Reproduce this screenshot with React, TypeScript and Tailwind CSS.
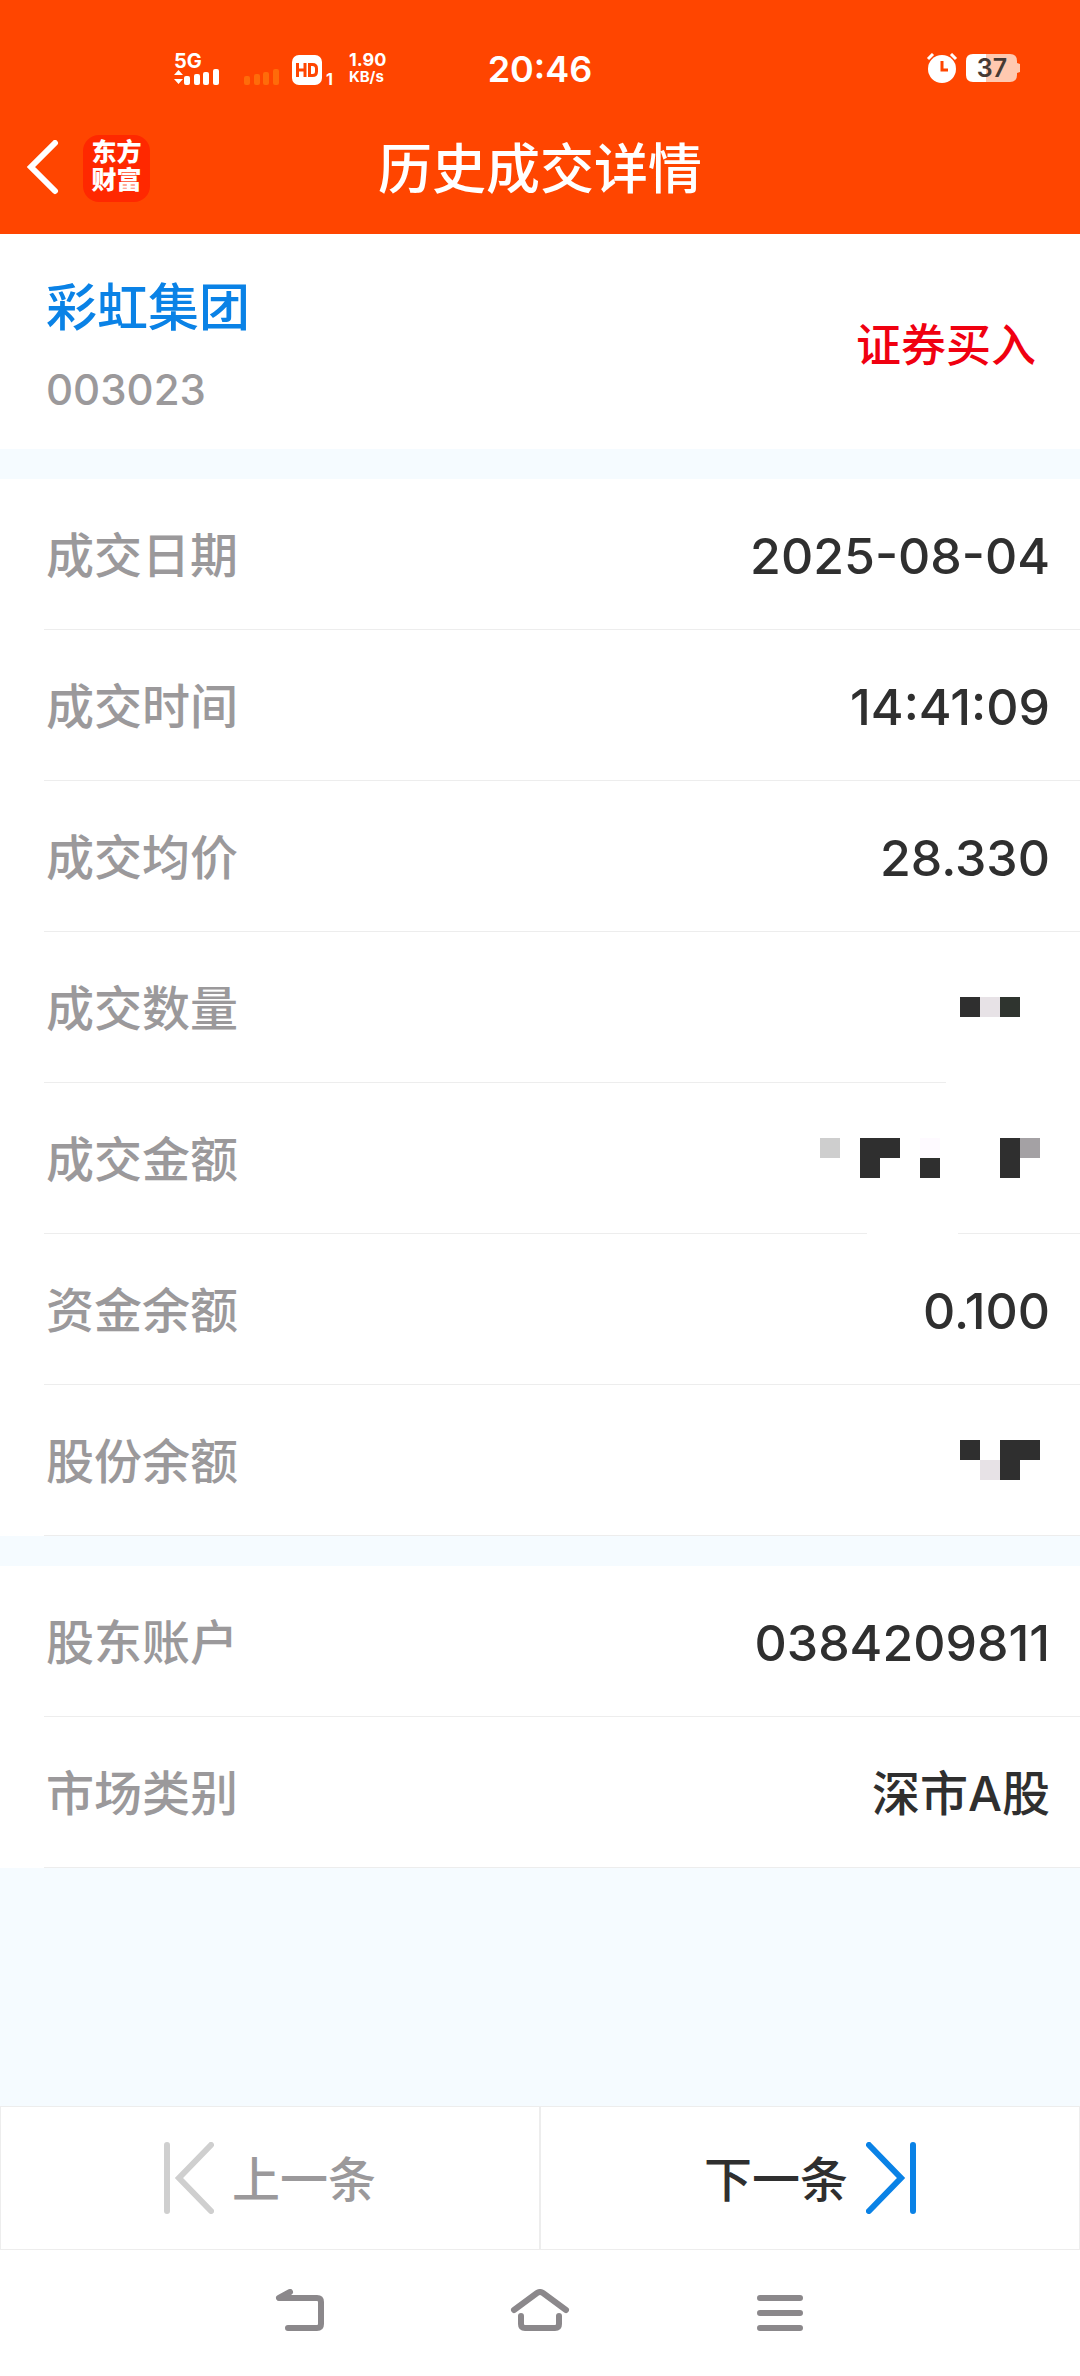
import React from "react";

type MosaicCell = [col: number, row: number, fill: string];

type DetailRow = {
  label: string;
  value?: string;
  mosaic?: { cols: number; rows: number; cells: MosaicCell[] };
  dividerMask?: string;
};

const INK = "#2f2f2f";

const tradeRows: DetailRow[] = [
  { label: "成交日期", value: "2025-08-04" },
  { label: "成交时间", value: "14:41:09" },
  { label: "成交均价", value: "28.330" },
  {
    label: "成交数量",
    mosaic: {
      cols: 4,
      rows: 1,
      cells: [
        [0, 0, INK],
        [1, 0, "#e7e2e6"],
        [2, 0, "#2f342f"],
      ],
    },
    dividerMask: "right-0 w-[134px]",
  },
  {
    label: "成交金额",
    mosaic: {
      cols: 11,
      rows: 2,
      cells: [
        [0, 0, "#cecece"],
        [2, 0, INK],
        [3, 0, INK],
        [2, 1, INK],
        [5, 0, "#fefaff"],
        [5, 1, INK],
        [9, 0, INK],
        [9, 1, INK],
        [10, 0, "#a4a1a4"],
      ],
    },
    dividerMask: "right-[122px] w-[91px]",
  },
  { label: "资金余额", value: "0.100" },
  {
    label: "股份余额",
    mosaic: {
      cols: 4,
      rows: 2,
      cells: [
        [0, 0, INK],
        [1, 1, "#e7e2e6"],
        [2, 0, INK],
        [3, 0, INK],
        [2, 1, INK],
      ],
    },
  },
];

const accountRows: DetailRow[] = [
  { label: "股东账户", value: "0384209811" },
  { label: "市场类别", value: "深市A股" },
];

const Mosaic: React.FC<NonNullable<DetailRow["mosaic"]>> = ({ cols, rows, cells }) => (
  <svg className="mr-2.5" width={cols * 20} height={rows * 20} shapeRendering="crispEdges" aria-hidden="true">
    {cells.map(([col, row, fill]) => (
      <rect key={`${col}-${row}`} x={col * 20} y={row * 20} width="20" height="20" fill={fill} />
    ))}
  </svg>
);

const isNumeric = (value: string) => /^[\d.:-]+$/.test(value);

const DetailList: React.FC<{ rows: DetailRow[] }> = ({ rows }) => (
  <dl className="bg-white">
    {rows.map(row => (
      <div
        key={row.label}
        className="relative ml-11 flex h-[151px] items-center justify-between border-b border-[#ededed] pr-[30px]"
      >
        <dt className="pl-0.5 pt-1 text-[48px] font-medium leading-[72px] text-[#9b999b]">{row.label}</dt>
        {row.mosaic && (
          <dd>
            <Mosaic {...row.mosaic} />
          </dd>
        )}
        {row.value && (
          <dd
            className={`pt-1 font-medium leading-[72px] text-[#2f2f2f] ${
              isNumeric(row.value) ? "text-[50px]" : "text-[48px]"
            }`}
          >
            {row.value}
          </dd>
        )}
        {row.dividerMask && <span className={`absolute -bottom-px h-px bg-white ${row.dividerMask}`} />}
      </div>
    ))}
  </dl>
);

const SignalBars: React.FC<{ className: string }> = ({ className }) => (
  <svg className={className} width="36" height="16" viewBox="0 0 36 16" fill="currentColor" aria-hidden="true">
    <rect x="0" y="7" width="6" height="9" rx="2" />
    <rect x="10" y="5" width="6" height="11" rx="2" />
    <rect x="19" y="3" width="6" height="13" rx="2" />
    <rect x="29" y="0" width="6" height="16" rx="2" />
  </svg>
);

const StatusBar = () => (
  <div className="grid h-[102px] grid-cols-[1fr_auto_1fr] items-center pt-[34px]">
    <div className="flex items-end pl-[174px]">
      <div className="flex flex-col">
        <span className="text-[20px] font-bold leading-4">5G</span>
        <div className="flex items-end">
          <svg width="9" height="16" viewBox="0 0 9 16" fill="currentColor" aria-hidden="true">
            <path d="M4.5 1 9 6H0zM0 10h9l-4.500 5z" />
          </svg>
          <SignalBars className="ml-px" />
        </div>
      </div>
      <SignalBars className="ml-6 text-[#ff6b0a]" />
      <svg className="ml-3" width="30" height="30" viewBox="0 0 30 30" aria-hidden="true">
        <rect width="30" height="30" rx="7" fill="#fff" />
        <path
          d="M5.500 8v14M13 8v14M5.500 15H13M17.500 9.500h3q4 0 4 4v3q0 4-4 4h-3z"
          fill="none"
          stroke="#ff4500"
          strokeWidth="3"
        />
      </svg>
      <span className="ml-1 text-[16px] font-bold leading-3">1</span>
      <div className="ml-4 flex flex-col font-bold">
        <span className="text-[18px] leading-[18px]">1.90</span>
        <span className="text-[15px] leading-4">KB/s</span>
      </div>
    </div>
    <time className="pt-0.5 text-[36px] font-semibold leading-10">20:46</time>
    <div className="flex items-center justify-end gap-2 pr-[59px]">
      <svg width="32" height="30" viewBox="0 0 32 30" aria-hidden="true">
        <circle cx="16" cy="16" r="14" fill="#fff" />
        <path d="m2 6 5-5M30 6l-5-5" stroke="#fff" strokeWidth="3" />
        <path d="M16 8v9h6" fill="none" stroke="#ff4500" strokeWidth="3" />
      </svg>
      <svg width="55" height="28" viewBox="0 0 55 28" aria-hidden="true">
        <path d="M7 0h13v28H7q-7 0-7-7V7q0-7 7-7z" fill="#fff" />
        <path d="M20 0h24q7 0 7 7v2l3 1v8l-3 1v2q0 7-7 7H20z" fill="#ffc9b0" />
        <text x="26" y="23" textAnchor="middle" fontSize="25" fontWeight="600" fill="#463a34">
          37
        </text>
      </svg>
    </div>
  </div>
);

const TitleBar = () => (
  <div className="grid h-[132px] grid-cols-[1fr_auto_1fr] items-center">
    <div className="flex items-center gap-6 pl-[26px]">
      <button type="button" aria-label="返回">
        <svg width="33" height="56" viewBox="0 0 33 56" fill="none" stroke="#fff" strokeWidth="6" strokeLinecap="round">
          <path d="M29 3 5 27l24 24" />
        </svg>
      </button>
      <div className="flex h-[67px] w-[67px] flex-col items-center justify-center rounded-2xl bg-[#ff2800] pb-1 text-[25px] font-black leading-7">
        <span>东方</span>
        <span>财富</span>
      </div>
    </div>
    <h1 className="pt-1 text-[54px] font-medium leading-[72px]">历史成交详情</h1>
  </div>
);

const SystemNav = () => (
  <nav className="flex h-[126px] justify-center bg-white pb-1 text-[#8b888b]">
    <button type="button" aria-label="系统返回" className="flex w-60 items-center justify-center">
      <svg width="50" height="44" viewBox="0 0 50 44" fill="none" stroke="currentColor" strokeWidth="6" strokeLinecap="round" strokeLinejoin="round">
        <path d="M15 3 4 9h38q4 0 4 4v22q0 4-4 4H13" />
      </svg>
    </button>
    <button type="button" aria-label="主页" className="flex w-60 items-center justify-center">
      <svg width="60" height="44" viewBox="0 0 60 44" fill="none" stroke="currentColor" strokeWidth="6" strokeLinecap="round">
        <path d="M4 21 27 4q3-2 6 0l23 17M11 27v8q0 4 4 4h30q4 0 4-4v-8" />
      </svg>
    </button>
    <button type="button" aria-label="最近任务" className="flex w-60 items-center justify-center">
      <svg width="46" height="44" viewBox="0 0 46 44" fill="none" stroke="currentColor" strokeWidth="6" strokeLinecap="round">
        <path d="M3 9h40M3 24h40M3 39h40" />
      </svg>
    </button>
  </nav>
);

export default function App() {
  return (
    <div className="flex min-h-screen flex-col bg-[#f5fbff] font-['Inter','Noto_Sans_CJK_SC',sans-serif]">
      <header className="bg-[#ff4500] text-white">
        <StatusBar />
        <TitleBar />
      </header>

      <main>
        <section className="flex items-center justify-between bg-white pl-[46px] pr-11">
          <div className="pb-[13px] pt-[38px]">
            <h2 className="text-[51px] font-medium leading-[72px] text-[#0a82e6]">彩虹集团</h2>
            <p className="text-[42px] font-medium leading-[92px] text-[#9b999b]">003023</p>
          </div>
          <span className="pt-2 text-[45px] font-medium leading-[72px] text-[#f00010]">证券买入</span>
        </section>

        <div className="mt-[30px]">
          <DetailList rows={tradeRows} />
        </div>
        <div className="mt-[30px]">
          <DetailList rows={accountRows} />
        </div>
      </main>

      <footer className="mt-auto">
        <div className="grid grid-cols-2 bg-white text-[48px] font-medium">
          <button
            type="button"
            className="flex h-36 items-center justify-center gap-[18px] border border-[#ededed] text-[#9b999b]"
          >
            <svg width="50" height="72" viewBox="0 0 50 72" fill="none" stroke="#cfcfcf" strokeWidth="6" strokeLinecap="round">
              <path d="M3 3v66M47 3 15 36l32 33" />
            </svg>
            <span className="pt-1">上一条</span>
          </button>
          <button
            type="button"
            className="flex h-36 items-center justify-center gap-[18px] border border-[#ededed] text-[#2f2f2f]"
          >
            <span className="pt-1">下一条</span>
            <svg width="50" height="72" viewBox="0 0 50 72" fill="none" stroke="#0a82e6" strokeWidth="6" strokeLinecap="round">
              <path d="M47 3v66M3 3l32 33L3 69" />
            </svg>
          </button>
        </div>
        <SystemNav />
      </footer>
    </div>
  );
}
